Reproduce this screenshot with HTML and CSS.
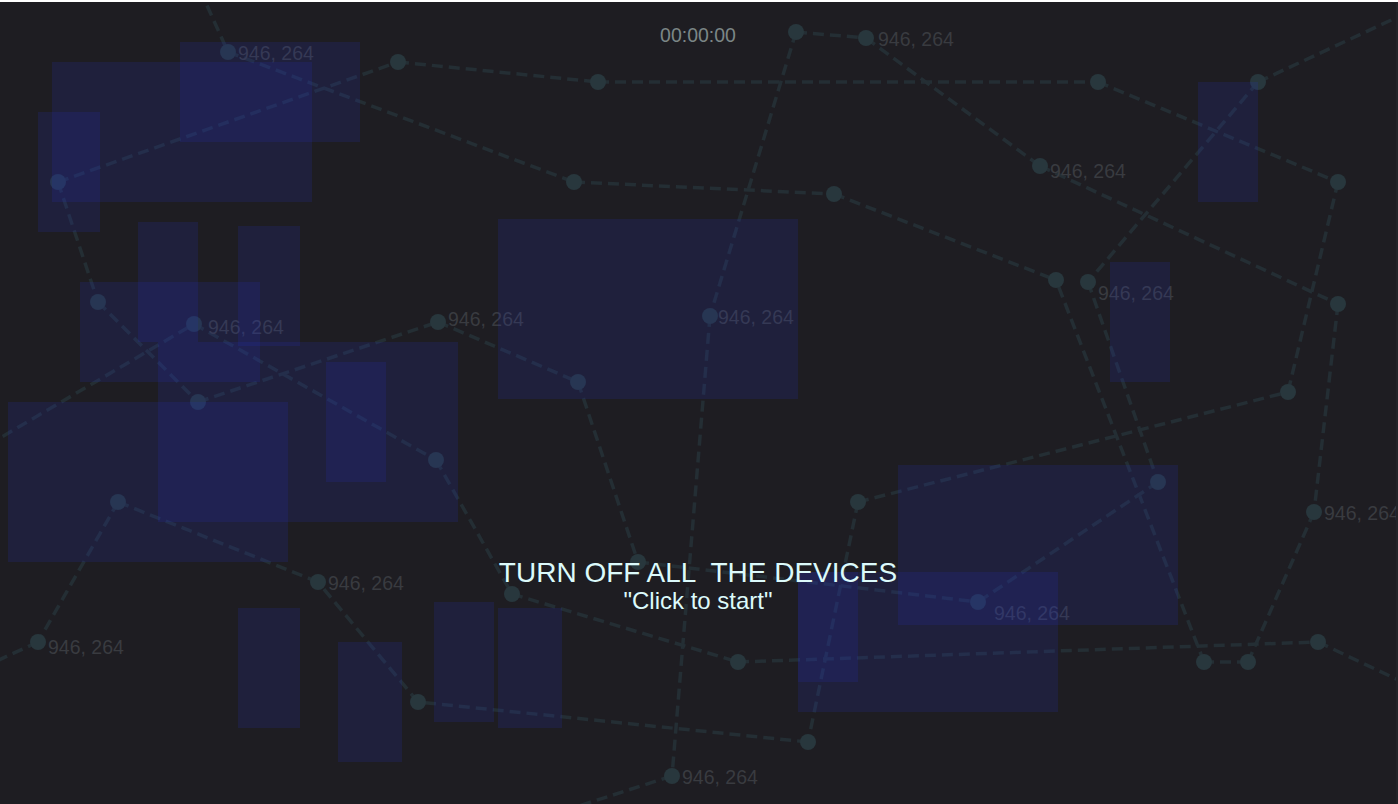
FILE: index.html
```html
<!DOCTYPE html>
<html lang="en">
<head>
<meta charset="utf-8">
<title>Turn off all the devices</title>
<link rel="stylesheet" href="styles.css">
</head>
<body>
<div class="page">
  <div class="stage">
    <svg class="board" viewBox="0 2 1396 802" width="1396" height="802" xmlns="http://www.w3.org/2000/svg">
      <g class="wires">
        <line x1="200" y1="-10" x2="228" y2="52"/>
        <line x1="228" y1="52" x2="574" y2="182"/>
        <line x1="58" y1="182" x2="398" y2="62"/>
        <line x1="398" y1="62" x2="598" y2="82"/>
        <line x1="598" y1="82" x2="1098" y2="82"/>
        <line x1="796" y1="32" x2="866" y2="38"/>
        <line x1="796" y1="32" x2="710" y2="316"/>
        <line x1="710" y1="316" x2="672" y2="776"/>
        <line x1="866" y1="38" x2="1040" y2="166"/>
        <line x1="1040" y1="166" x2="1338" y2="304"/>
        <line x1="1098" y1="82" x2="1338" y2="182"/>
        <line x1="1258" y1="82" x2="1430" y2="2"/>
        <line x1="1258" y1="82" x2="1088" y2="282"/>
        <line x1="1338" y1="182" x2="1288" y2="392"/>
        <line x1="1338" y1="304" x2="1314" y2="512"/>
        <line x1="1314" y1="512" x2="1248" y2="662"/>
        <line x1="1248" y1="662" x2="1204" y2="662"/>
        <line x1="1204" y1="662" x2="1056" y2="280"/>
        <line x1="1088" y1="282" x2="1158" y2="482"/>
        <line x1="1158" y1="482" x2="978" y2="602"/>
        <line x1="638" y1="562" x2="978" y2="602"/>
        <line x1="858" y1="502" x2="1288" y2="392"/>
        <line x1="858" y1="502" x2="808" y2="742"/>
        <line x1="808" y1="742" x2="418" y2="702"/>
        <line x1="418" y1="702" x2="318" y2="582"/>
        <line x1="318" y1="582" x2="118" y2="502"/>
        <line x1="118" y1="502" x2="38" y2="642"/>
        <line x1="38" y1="642" x2="-12" y2="665"/>
        <line x1="512" y1="594" x2="738" y2="662"/>
        <line x1="738" y1="662" x2="1318" y2="642"/>
        <line x1="1318" y1="642" x2="1430" y2="695"/>
        <line x1="672" y1="776" x2="560" y2="812"/>
        <line x1="436" y1="460" x2="512" y2="594"/>
        <line x1="194" y1="324" x2="436" y2="460"/>
        <line x1="98" y1="302" x2="198" y2="402"/>
        <line x1="198" y1="402" x2="438" y2="322"/>
        <line x1="-12" y1="445" x2="194" y2="324"/>
        <line x1="58" y1="182" x2="98" y2="302"/>
        <line x1="438" y1="322" x2="578" y2="382"/>
        <line x1="578" y1="382" x2="638" y2="562"/>
        <line x1="574" y1="182" x2="834" y2="194"/>
        <line x1="834" y1="194" x2="1056" y2="280"/>
      </g>
      <g class="nodes">
        <circle cx="228" cy="52" r="8"/>
        <circle cx="398" cy="62" r="8"/>
        <circle cx="598" cy="82" r="8"/>
        <circle cx="796" cy="32" r="8"/>
        <circle cx="866" cy="38" r="8"/>
        <circle cx="1098" cy="82" r="8"/>
        <circle cx="1258" cy="82" r="8"/>
        <circle cx="1040" cy="166" r="8"/>
        <circle cx="1338" cy="182" r="8"/>
        <circle cx="58" cy="182" r="8"/>
        <circle cx="574" cy="182" r="8"/>
        <circle cx="834" cy="194" r="8"/>
        <circle cx="1056" cy="280" r="8"/>
        <circle cx="1088" cy="282" r="8"/>
        <circle cx="1338" cy="304" r="8"/>
        <circle cx="98" cy="302" r="8"/>
        <circle cx="194" cy="324" r="8"/>
        <circle cx="438" cy="322" r="8"/>
        <circle cx="710" cy="316" r="8"/>
        <circle cx="578" cy="382" r="8"/>
        <circle cx="1288" cy="392" r="8"/>
        <circle cx="198" cy="402" r="8"/>
        <circle cx="436" cy="460" r="8"/>
        <circle cx="1158" cy="482" r="8"/>
        <circle cx="858" cy="502" r="8"/>
        <circle cx="118" cy="502" r="8"/>
        <circle cx="1314" cy="512" r="8"/>
        <circle cx="638" cy="562" r="8"/>
        <circle cx="512" cy="594" r="8"/>
        <circle cx="318" cy="582" r="8"/>
        <circle cx="978" cy="602" r="8"/>
        <circle cx="38" cy="642" r="8"/>
        <circle cx="738" cy="662" r="8"/>
        <circle cx="1204" cy="662" r="8"/>
        <circle cx="1248" cy="662" r="8"/>
        <circle cx="1318" cy="642" r="8"/>
        <circle cx="418" cy="702" r="8"/>
        <circle cx="808" cy="742" r="8"/>
        <circle cx="672" cy="776" r="8"/>
      </g>
      <g class="labels">
        <text x="238" y="60">946, 264</text>
        <text x="878" y="46">946, 264</text>
        <text x="1050" y="178">946, 264</text>
        <text x="1098" y="300">946, 264</text>
        <text x="208" y="334">946, 264</text>
        <text x="448" y="326">946, 264</text>
        <text x="718" y="324">946, 264</text>
        <text x="1324" y="520">946, 264</text>
        <text x="328" y="590">946, 264</text>
        <text x="994" y="620">946, 264</text>
        <text x="48" y="654">946, 264</text>
        <text x="682" y="784">946, 264</text>
      </g>
      <g class="zones">
        <rect x="52" y="62" width="260" height="140"/>
        <rect x="180" y="42" width="180" height="100"/>
        <rect x="38" y="112" width="62" height="120"/>
        <rect x="138" y="222" width="60" height="120"/>
        <rect x="238" y="226" width="62" height="120"/>
        <rect x="80" y="282" width="180" height="100"/>
        <rect x="158" y="342" width="300" height="180"/>
        <rect x="326" y="362" width="60" height="120"/>
        <rect x="8" y="402" width="280" height="160"/>
        <rect x="498" y="219" width="300" height="180"/>
        <rect x="1198" y="82" width="60" height="120"/>
        <rect x="1110" y="262" width="60" height="120"/>
        <rect x="898" y="465" width="280" height="160"/>
        <rect x="798" y="572" width="260" height="140"/>
        <rect x="798" y="572" width="60" height="110"/>
        <rect x="238" y="608" width="62" height="120"/>
        <rect x="338" y="642" width="64" height="120"/>
        <rect x="434" y="602" width="60" height="120"/>
        <rect x="498" y="608" width="64" height="120"/>
      </g>
    </svg>
    <div class="overlay">
      <div class="timer">00:00:00</div>
      <div class="intro">
        <div class="title">TURN OFF ALL  THE DEVICES</div>
        <div class="hint">"Click to start"</div>
      </div>
    </div>
  </div>
</div>
</body>
</html>
```

FILE: styles.css
```css
html, body {
  margin: 0;
  padding: 0;
  background: #1e1d22;
}

.page {
  border-top: 2px solid #ffffff;
  width: 1398px;
  height: 802px;
  overflow: hidden;
  background: #1e1d22;
}

.stage {
  position: relative;
  width: 1396px;
  height: 802px;
  background: #1e1d22;
  border-right: 2px solid #232328;
  font-family: "Liberation Sans", Arial, Helvetica, sans-serif;
}

.board {
  display: block;
}

.wires line {
  stroke: #242e34;
  stroke-width: 3.5;
  stroke-dasharray: 11 6;
  stroke-linecap: butt;
}

.nodes circle {
  fill: #28373d;
}

.labels text {
  font-family: "Liberation Sans", Arial, Helvetica, sans-serif;
  font-size: 19.5px;
  fill: #393b40;
}

.zones rect {
  fill: rgba(40, 50, 200, 0.16);
}

.overlay {
  position: absolute;
  inset: 0;
  display: flex;
  flex-direction: column;
  align-items: center;
}

.timer {
  margin-top: 21px;
  font-size: 19.5px;
  line-height: 24px;
  color: #7b8686;
}

.intro {
  margin-top: 511px;
  display: flex;
  flex-direction: column;
  align-items: center;
  color: #dcfafb;
}

.title {
  font-size: 28px;
  line-height: 30px;
  white-space: pre;
}

.hint {
  font-size: 24px;
  line-height: 26px;
}
```
